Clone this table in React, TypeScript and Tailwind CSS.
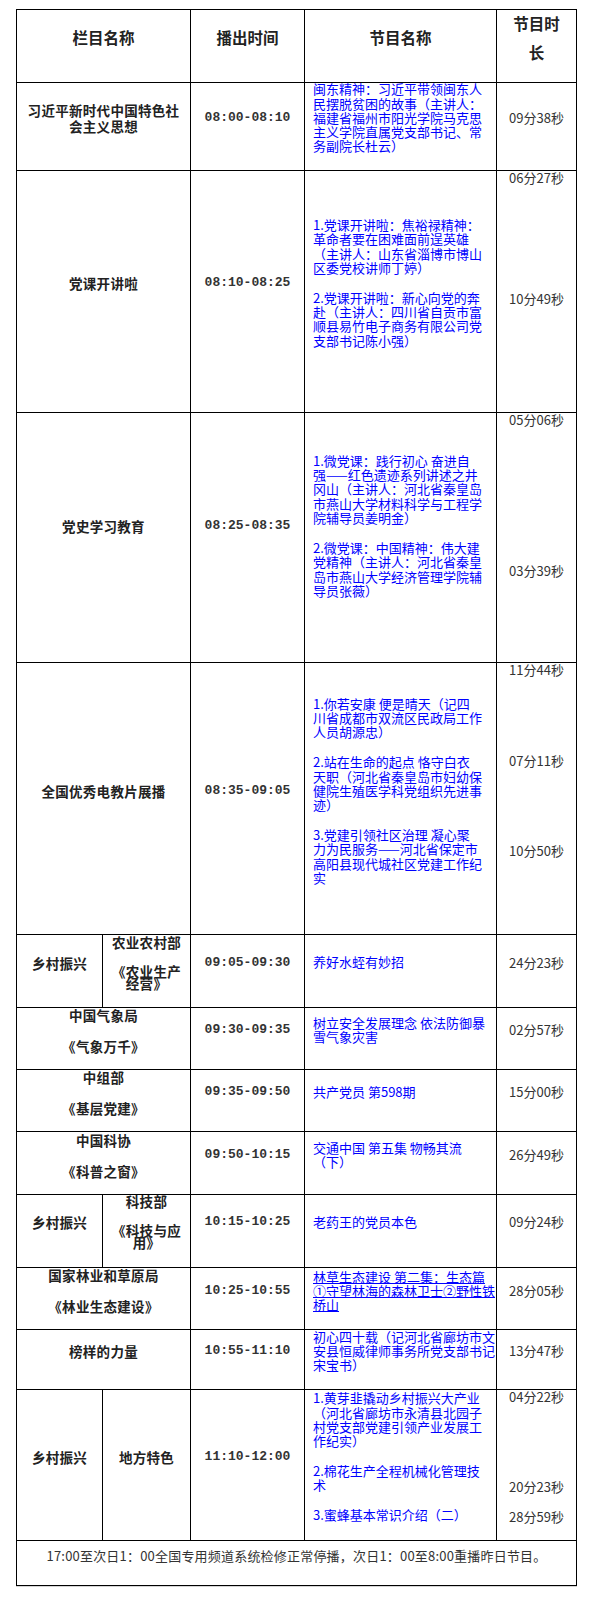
import React from 'react';

const sans = "font-['Noto_Sans_CJK_SC',sans-serif]";
const bold = 'font-bold text-[13.5px] tracking-[0.3px] text-[#222] text-center whitespace-nowrap';
const blue = 'text-[13px] leading-[14.3px] text-[#0000ff] whitespace-nowrap';
const dur = 'text-[13px] leading-[14px] text-[#333] whitespace-nowrap';

// lines joined with <br/> so each paragraph stays one text block
const Lines: React.FC<{ lines: string[] }> = ({ lines }) => (
  <>
    {lines.map((l, i) => (
      <React.Fragment key={i}>
        {i > 0 && <br />}
        {l}
      </React.Fragment>
    ))}
  </>
);

const Cell: React.FC<{ className?: string; children?: React.ReactNode }> = ({ className = '', children }) => (
  <div className={`border-r border-b border-black overflow-visible ${className}`}>{children}</div>
);

// centred cell, shifted up by its bottom padding like the source page
const Mid: React.FC<{ pb: string; className?: string; children?: React.ReactNode }> = ({ pb, className = '', children }) => (
  <Cell className={`flex flex-col justify-center ${pb} ${className}`}>{children}</Cell>
);

const Title: React.FC<{ pb: string; span?: boolean; lines: string[][] }> = ({ pb, span = true, lines }) => (
  <Mid pb={pb} className={`${span ? 'col-span-2' : ''} items-center`}>
    {lines.map((p, i) => (
      <div key={i} className={`${bold} leading-[14px] ${i > 0 ? 'mt-[17px]' : ''}`}>
        <Lines lines={p} />
      </div>
    ))}
  </Mid>
);

const Time: React.FC<{ pb: string; t: string }> = ({ pb, t }) => (
  <Mid pb={pb} className="items-center">
    <div className="font-['Liberation_Mono',monospace] font-bold text-[13px] text-[#333] leading-[14px] whitespace-nowrap">{t}</div>
  </Mid>
);

const Program: React.FC<{ pb: string; paras: string[][]; underline?: boolean }> = ({ pb, paras, underline }) => (
  <Mid pb={pb} className="pl-[8px]">
    {paras.map((p, i) => (
      <div key={i} className={`${blue} ${underline ? 'underline' : ''} ${i > 0 ? 'mt-[15.7px]' : ''}`}>
        <Lines lines={p} />
      </div>
    ))}
  </Mid>
);

const Dur: React.FC<{ pb: string; d: string }> = ({ pb, d }) => (
  <Mid pb={pb} className="items-center">
    <div className={dur}>{d}</div>
  </Mid>
);

// sub heading cell: department over programme name
const Dept: React.FC<{ pb: string; top: string; name: string[] }> = ({ pb, top, name }) => (
  <Mid pb={pb} className="items-center">
    <div className={`${bold} leading-[12px]`}>{top}</div>
    <div className={`${bold} leading-[11.6px] mt-[18px]`}>
      <Lines lines={name} />
    </div>
  </Mid>
);

export default function App() {
  return (
    <div className={`min-h-[1603px] bg-white pt-[9px] ${sans}`}>
      <div className="ml-[16px] w-[561px] grid grid-cols-[86px_88px_114px_192px_80px] grid-rows-[73px_88px_242px_250px_272px_73px_62px_62px_63px_73px_62px_60px_151px_45px] border-l border-t border-black shadow-[0_1px_0_#d4d4d4]">
        {/* header */}
        {['栏目名称', '播出时间', '节目名称'].map((h, i) => (
          <Mid key={h} pb="pb-[17px]" className={`items-center ${i === 0 ? 'col-span-2' : ''}`}>
            <div className="font-bold text-[15.5px] leading-[29px] text-[#222] whitespace-nowrap">{h}</div>
          </Mid>
        ))}
        <Mid pb="pb-[17px]" className="items-center">
          <div className="font-bold text-[15.5px] leading-[29px] text-[#222] text-center whitespace-nowrap">
            节目时
            <br />长
          </div>
        </Mid>

        {/* row 1 */}
        <Mid pb="pb-[17px]" className="col-span-2 items-center">
          <div className={`${bold} leading-[16px]`}>
            <Lines lines={['习近平新时代中国特色社', '会主义思想']} />
          </div>
        </Mid>
        <Time pb="pb-[17px]" t="08:00-08:10" />
        <Program
          pb="pb-[17px]"
          paras={[['闽东精神：习近平带领闽东人', '民摆脱贫困的故事（主讲人：', '福建省福州市阳光学院马克思', '主义学院直属党支部书记、常', '务副院长杜云）']]}
        />
        <Dur pb="pb-[17px]" d="09分38秒" />

        {/* row 2 */}
        <Title pb="pb-[17px]" lines={[['党课开讲啦']]} />
        <Time pb="pb-[17px]" t="08:10-08:25" />
        <Program
          pb="pb-[17px]"
          paras={[
            ['1.党课开讲啦：焦裕禄精神：', '革命者要在困难面前逞英雄', '（主讲人：山东省淄博市博山', '区委党校讲师丁婷）'],
            ['2.党课开讲啦：新心向党的奔', '赴（主讲人：四川省自贡市富', '顺县易竹电子商务有限公司党', '支部书记陈小强）'],
          ]}
        />
        <Cell className="flex flex-col items-center">
          <div className={dur}>06分27秒</div>
          <div className={`${dur} mt-[107px]`}>10分49秒</div>
        </Cell>

        {/* row 3 */}
        <Title pb="pb-[23px]" lines={[['党史学习教育']]} />
        <Time pb="pb-[23px]" t="08:25-08:35" />
        <Program
          pb="pb-[23px]"
          paras={[
            ['1.微党课：践行初心 奋进自', '强——红色遗迹系列讲述之井', '冈山（主讲人：河北省秦皇岛', '市燕山大学材料科学与工程学', '院辅导员姜明金）'],
            ['2.微党课：中国精神：伟大建', '党精神（主讲人：河北省秦皇', '岛市燕山大学经济管理学院辅', '导员张薇）'],
          ]}
        />
        <Cell className="flex flex-col items-center">
          <div className={dur}>05分06秒</div>
          <div className={`${dur} mt-[137px]`}>03分39秒</div>
        </Cell>

        {/* row 4 */}
        <Title pb="pb-[15px]" lines={[['全国优秀电教片展播']]} />
        <Time pb="pb-[15px]" t="08:35-09:05" />
        <Program
          pb="pb-[15px]"
          paras={[
            ['1.你若安康 便是晴天（记四', '川省成都市双流区民政局工作', '人员胡源忠）'],
            ['2.站在生命的起点 恪守白衣', '天职（河北省秦皇岛市妇幼保', '健院生殖医学科党组织先进事', '迹）'],
            ['3.党建引领社区治理 凝心聚', '力为民服务——河北省保定市', '高阳县现代城社区党建工作纪', '实'],
          ]}
        />
        <Cell className="flex flex-col items-center">
          <div className={dur}>11分44秒</div>
          <div className={`${dur} mt-[77px]`}>07分11秒</div>
          <div className={`${dur} mt-[76px]`}>10分50秒</div>
        </Cell>

        {/* row 5 */}
        <Title pb="pb-[17px]" span={false} lines={[['乡村振兴']]} />
        <Dept pb="pb-[17px]" top="农业农村部" name={['《农业生产', '经营》']} />
        <Time pb="pb-[17px]" t="09:05-09:30" />
        <Program pb="pb-[17px]" paras={[['养好水蛭有妙招']]} />
        <Dur pb="pb-[17px]" d="24分23秒" />

        {/* row 6 */}
        <Title pb="pb-[17px]" lines={[['中国气象局'], ['《气象万千》']]} />
        <Time pb="pb-[17px]" t="09:30-09:35" />
        <Program pb="pb-[17px]" paras={[['树立安全发展理念 依法防御暴', '雪气象灾害']]} />
        <Dur pb="pb-[17px]" d="02分57秒" />

        {/* row 7 */}
        <Title pb="pb-[17px]" lines={[['中组部'], ['《基层党建》']]} />
        <Time pb="pb-[17px]" t="09:35-09:50" />
        <Program pb="pb-[17px]" paras={[['共产党员 第598期']]} />
        <Dur pb="pb-[17px]" d="15分00秒" />

        {/* row 8 */}
        <Title pb="pb-[16px]" lines={[['中国科协'], ['《科普之窗》']]} />
        <Time pb="pb-[16px]" t="09:50-10:15" />
        <Program pb="pb-[16px]" paras={[['交通中国 第五集 物畅其流', '（下）']]} />
        <Dur pb="pb-[16px]" d="26分49秒" />

        {/* row 9 */}
        <Title pb="pb-[18px]" span={false} lines={[['乡村振兴']]} />
        <Dept pb="pb-[18px]" top="科技部" name={['《科技与应', '用》']} />
        <Time pb="pb-[18px]" t="10:15-10:25" />
        <Program pb="pb-[18px]" paras={[['老药王的党员本色']]} />
        <Dur pb="pb-[18px]" d="09分24秒" />

        {/* row 10 */}
        <Title pb="pb-[17px]" lines={[['国家林业和草原局'], ['《林业生态建设》']]} />
        <Time pb="pb-[15px]" t="10:25-10:55" />
        <Program
          pb="pb-[15px]"
          underline
          paras={[['林草生态建设 第二集：生态篇', '①守望林海的森林卫士②野性铁', '桥山']]}
        />
        <Dur pb="pb-[15px]" d="28分05秒" />

        {/* row 11 */}
        <Title pb="pb-[17px]" lines={[['榜样的力量']]} />
        <Time pb="pb-[17px]" t="10:55-11:10" />
        <Program pb="pb-[17px]" paras={[['初心四十载（记河北省廊坊市文', '安县恒威律师事务所党支部书记', '宋宝书）']]} />
        <Dur pb="pb-[17px]" d="13分47秒" />

        {/* row 12 */}
        <Title pb="pb-[16px]" span={false} lines={[['乡村振兴']]} />
        <Title pb="pb-[16px]" span={false} lines={[['地方特色']]} />
        <Time pb="pb-[16px]" t="11:10-12:00" />
        <Program
          pb="pb-[16px]"
          paras={[
            ['1.黄芽韭撬动乡村振兴大产业', '（河北省廊坊市永清县北园子', '村党支部党建引领产业发展工', '作纪实）'],
            ['2.棉花生产全程机械化管理技', '术'],
            ['3.蜜蜂基本常识介绍（二）'],
          ]}
        />
        <Cell className="flex flex-col items-center">
          <div className={dur}>04分22秒</div>
          <div className={`${dur} mt-[76px]`}>20分23秒</div>
          <div className={`${dur} mt-[16px]`}>28分59秒</div>
        </Cell>

        {/* footer */}
        <Cell className="col-span-5 pt-[7px]">
          <div className="text-center text-[13px] tracking-[0.2px] leading-[16px] text-[#333] whitespace-nowrap">
            17:00至次日1：00全国专用频道系统检修正常停播，次日1：00至8:00重播昨日节目。
          </div>
        </Cell>
      </div>
    </div>
  );
}
